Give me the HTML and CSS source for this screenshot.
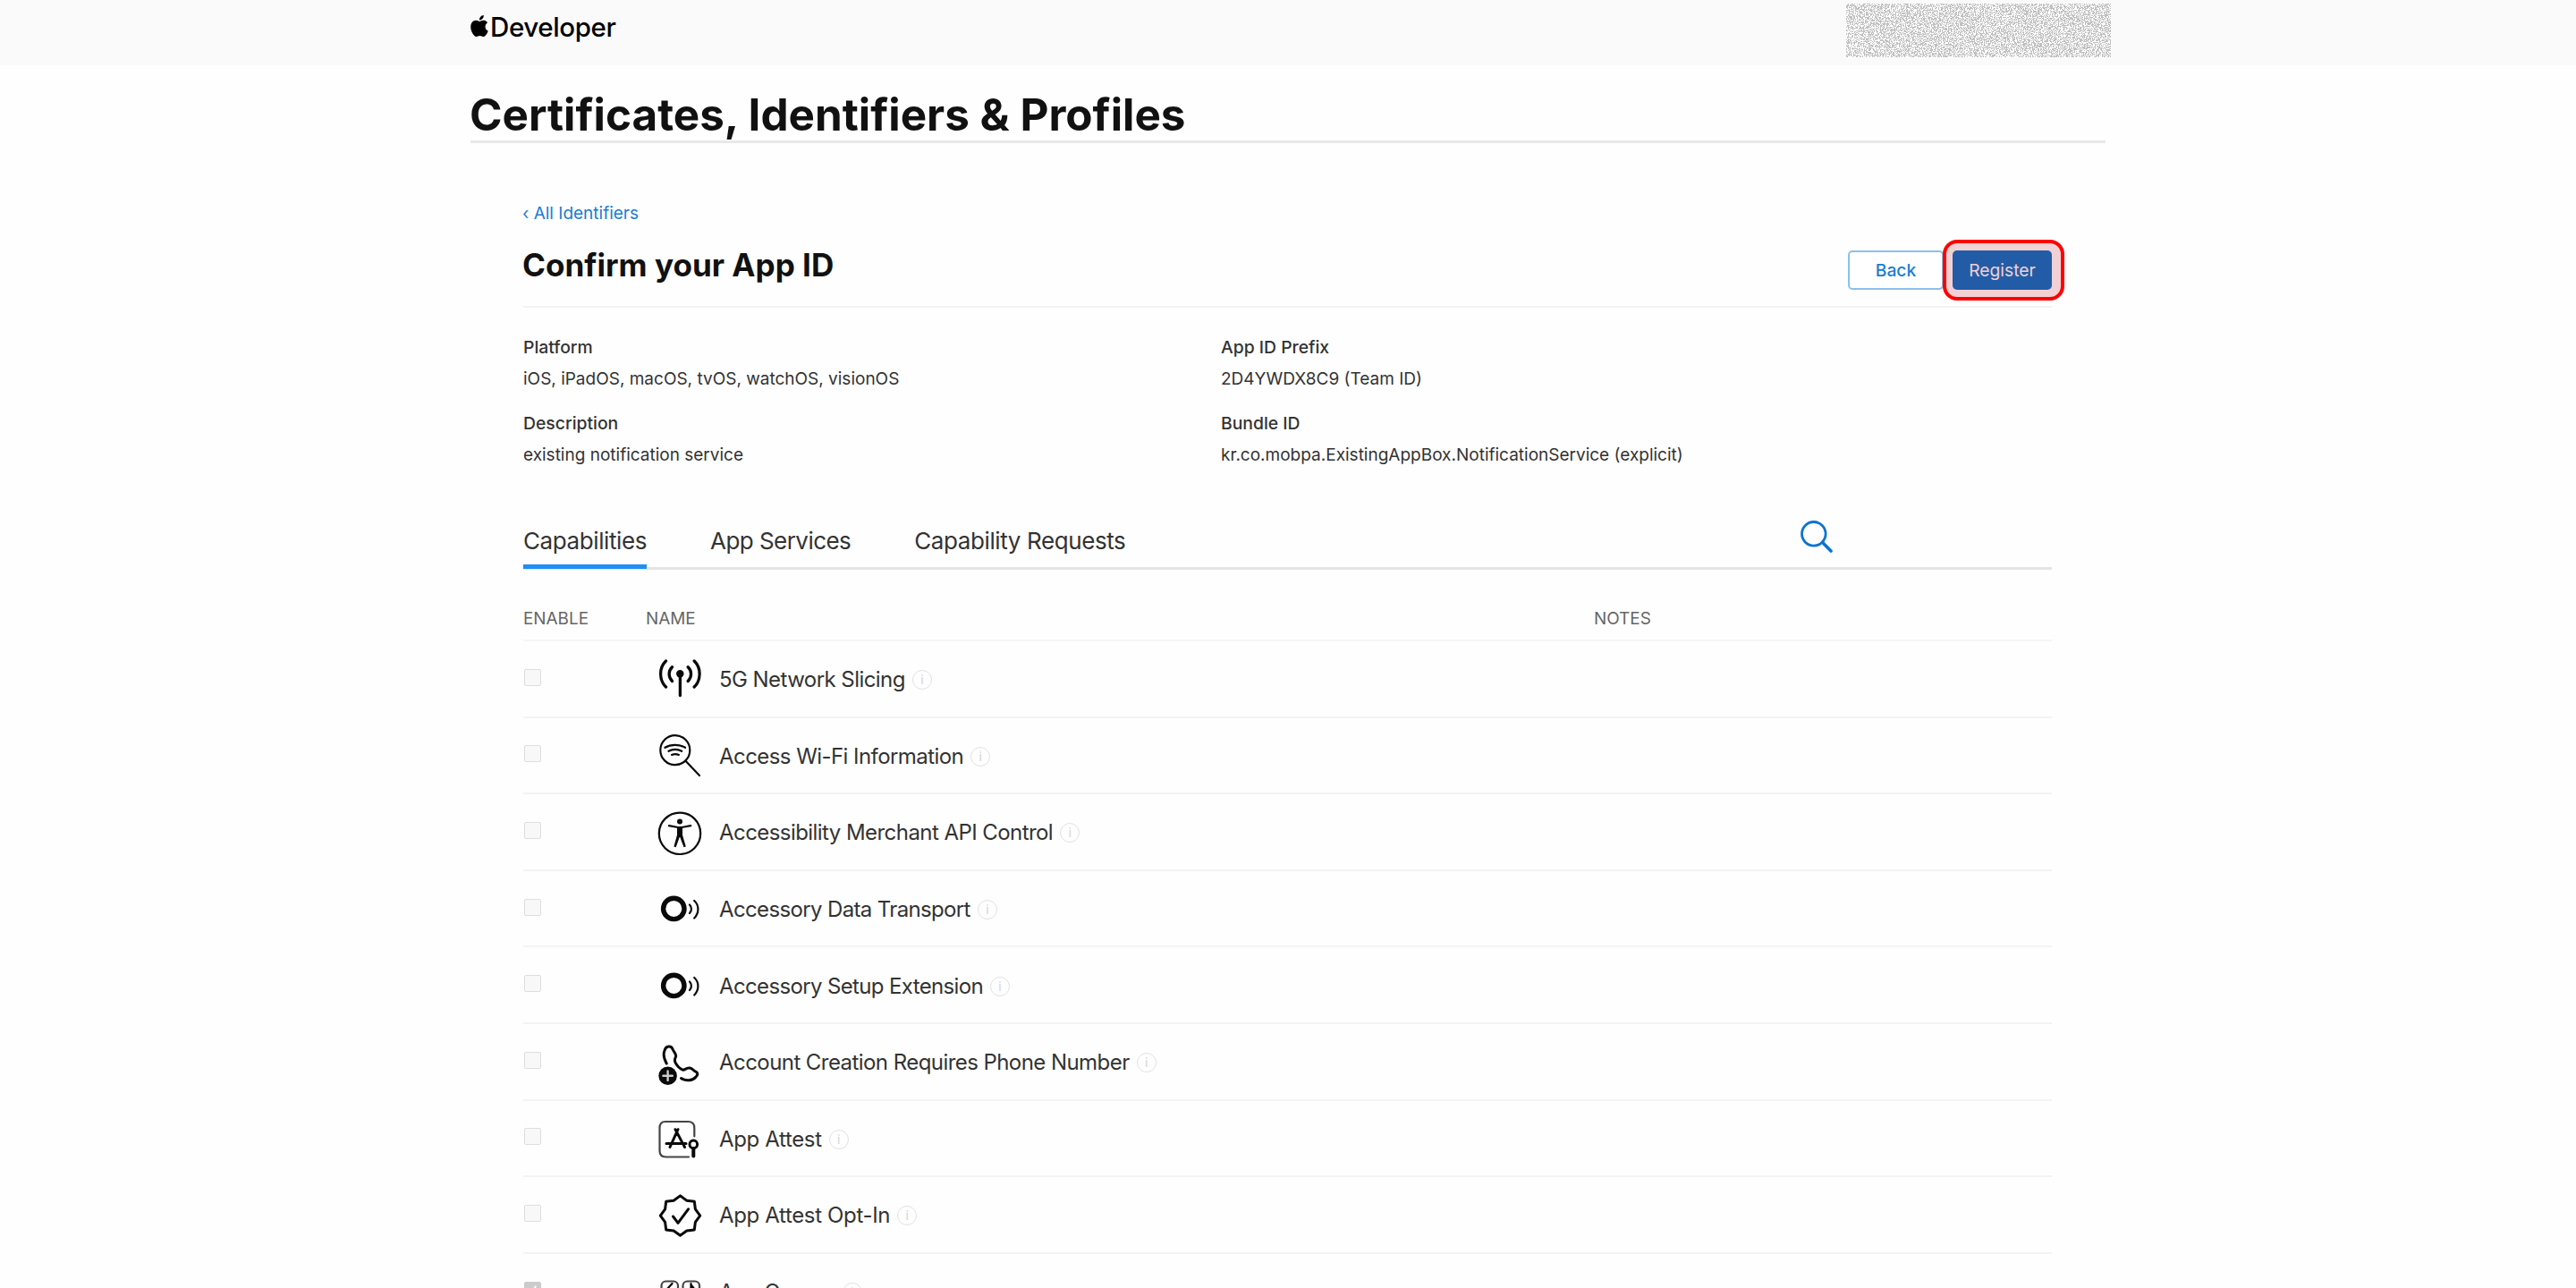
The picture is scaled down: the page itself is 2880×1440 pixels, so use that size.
FILE: index.html
```html
<!DOCTYPE html>
<html lang="en">
<head>
<meta charset="utf-8">
<title>Certificates, Identifiers &amp; Profiles</title>
<link rel="stylesheet" href="styles.css">
</head>
<body>
<header class="topbar">
  <div class="brand">
    <svg class="brand-mark" viewBox="2 0 20 24"><path d="M12.152 6.896c-.948 0-2.415-1.078-3.96-1.04-2.04.027-3.91 1.183-4.961 3.014-2.117 3.675-.546 9.103 1.519 12.09 1.013 1.454 2.208 3.09 3.792 3.039 1.52-.065 2.09-.987 3.935-.987 1.831 0 2.35.987 3.96.948 1.637-.026 2.676-1.48 3.676-2.948 1.156-1.688 1.636-3.325 1.662-3.415-.039-.013-3.182-1.221-3.22-4.857-.026-3.04 2.48-4.494 2.597-4.559-1.429-2.09-3.623-2.324-4.39-2.376-2-.156-3.675 1.09-4.61 1.09zM15.53 3.83c.843-1.012 1.4-2.427 1.245-3.83-1.207.052-2.662.805-3.532 1.818-.78.896-1.454 2.338-1.273 3.714 1.338.104 2.715-.688 3.559-1.701"/></svg>
    <span class="brand-name">Developer</span>
  </div>
  <svg class="redacted" width="296" height="60">
    <filter id="grain" x="0" y="0" width="100%" height="100%" color-interpolation-filters="sRGB">
      <feTurbulence type="fractalNoise" baseFrequency="0.83" numOctaves="2" seed="4"/>
      <feColorMatrix values="1 0 0 0 0.47  1 0 0 0 0.47  1 0 0 0 0.47  0 0 0 0 1"/>
      <feComponentTransfer>
        <feFuncR type="discrete" tableValues="0.753 0.753 0.753 0.753 0.753 0.753 0.753 0.753 0.753 0.753 0.753 0.753 0.753 0.753 0.753 0.753 0.753 0.753 0.753 0.753 0.753 0.753 0.753 0.753 0.753 0.753 0.753 0.753 0.753 0.753 0.753 0.753 0.753 0.753 0.753 0.753 0.753 0.753 0.753 1"/>
        <feFuncG type="discrete" tableValues="0.753 0.753 0.753 0.753 0.753 0.753 0.753 0.753 0.753 0.753 0.753 0.753 0.753 0.753 0.753 0.753 0.753 0.753 0.753 0.753 0.753 0.753 0.753 0.753 0.753 0.753 0.753 0.753 0.753 0.753 0.753 0.753 0.753 0.753 0.753 0.753 0.753 0.753 0.753 1"/>
        <feFuncB type="discrete" tableValues="0.753 0.753 0.753 0.753 0.753 0.753 0.753 0.753 0.753 0.753 0.753 0.753 0.753 0.753 0.753 0.753 0.753 0.753 0.753 0.753 0.753 0.753 0.753 0.753 0.753 0.753 0.753 0.753 0.753 0.753 0.753 0.753 0.753 0.753 0.753 0.753 0.753 0.753 0.753 1"/>
      </feComponentTransfer>
    </filter>
    <rect width="296" height="60" filter="url(#grain)"/>
  </svg>
</header>

<div class="page">
  <h1 class="page-title">Certificates, Identifiers &amp; Profiles</h1>
  <main class="content">
    <a class="back-link">‹ All Identifiers</a>
    <div class="heading">
      <h2 class="heading-title">Confirm your App ID</h2>
      <div class="actions">
        <div class="button button-back">Back</div>
        <div class="highlight"><div class="button button-register">Register</div></div>
      </div>
    </div>

    <section class="info">
      <dl class="info-col">
        <dt>Platform</dt><dd>iOS, iPadOS, macOS, tvOS, watchOS, visionOS</dd>
        <dt>Description</dt><dd>existing notification service</dd>
      </dl>
      <dl class="info-col">
        <dt>App ID Prefix</dt><dd>2D4YWDX8C9 (Team ID)</dd>
        <dt>Bundle ID</dt><dd>kr.co.mobpa.ExistingAppBox.NotificationService (explicit)</dd>
      </dl>
    </section>

    <nav class="tabs">
      <span class="tab tab-active">Capabilities</span>
      <span class="tab tab-services">App Services</span>
      <span class="tab">Capability Requests</span>
      <svg class="search" width="36" height="36" viewBox="0 0 36 36"><circle cx="14.8" cy="14.8" r="13.3"/><path class="search-handle" d="M24.6 24.6L34 34"/></svg>
    </nav>

    <div class="table">
      <div class="table-head"><span>ENABLE</span><span>NAME</span><span>NOTES</span></div>

      <div class="row">
        <span class="check"></span>
        <svg class="icon" viewBox="0 0 52 52"><circle class="solid" cx="26.3" cy="19.2" r="4.2"/><path class="w3 w3-bold" d="M26.4 20V43.5M10.5 5C2.6 12.5 2.6 26.5 10.5 34M17.5 11.7C13 16 13 23.2 17.5 27.5M42.2 5C50.1 12.5 50.1 26.5 42.2 34M35.2 11.7C39.7 16 39.7 23.2 35.2 27.5"/></svg>
        <span class="name">5G Network Slicing</span><span class="tip">i</span>
      </div>
      <div class="row">
        <span class="check"></span>
        <svg class="icon" viewBox="0 0 52 52"><circle class="w2" cx="20.8" cy="18.7" r="16.5"/><path class="w2" d="M32.3 30.6L48 47M9.5 15.8C16 11.8 25.5 11.8 32 15.8M13.5 19.8C18 17.3 23.5 17.3 28.2 19.8M17 23.9C19.5 22.9 22.5 22.9 24.9 23.9"/></svg>
        <span class="name">Access Wi-Fi Information</span><span class="tip">i</span>
      </div>
      <div class="row">
        <span class="check"></span>
        <svg class="icon" viewBox="0 0 52 52"><circle class="w2" cx="26" cy="26.8" r="23.2"/><circle class="solid" cx="26" cy="13.5" r="3"/><path class="w2" d="M14 18.2L24 20H28L38.2 18.2"/><path class="solid" d="M23 19H29V28.5L32.8 41.5L30.5 42.3L26.3 31H25.7L21.7 42.3L19.4 41.5L23 28.5Z"/></svg>
        <span class="name">Accessibility Merchant API Control</span><span class="tip">i</span>
      </div>
      <div class="row">
        <span class="check"></span>
        <svg class="icon" viewBox="0 0 52 52"><circle class="w5" cx="19.3" cy="24.9" r="11.7"/><path class="w2" d="M37 20.5C39.6 23 39.6 27.5 37 30M42.2 16C47.8 21 47.8 30 42.2 35.5"/></svg>
        <span class="name name-tight">Accessory Data Transport</span><span class="tip">i</span>
      </div>
      <div class="row">
        <span class="check"></span>
        <svg class="icon" viewBox="0 0 52 52"><circle class="w5" cx="19.3" cy="24.9" r="11.7"/><path class="w2" d="M37 20.5C39.6 23 39.6 27.5 37 30M42.2 16C47.8 21 47.8 30 42.2 35.5"/></svg>
        <span class="name name-tight">Accessory Setup Extension</span><span class="tip">i</span>
      </div>
      <div class="row">
        <span class="check"></span>
        <svg class="icon" viewBox="0 0 52 52"><path class="w3" d="M11.2 27C8.5 22 7.5 16 9 12.5C10.5 7 16.5 6.5 18.3 11.5C19.8 15 22.5 16.5 21.5 19.5C20.5 21.5 19.5 23 21.3 26.5C23.3 30 26.5 33 29.5 34.2C31.5 34.7 33 31.5 37 32C40.5 32.5 41.5 35.5 44.5 36.5C46.5 37.8 46 40 44 42C40.5 46.5 32.5 47 27.5 43.5"/><circle class="solid" cx="12.6" cy="40.7" r="10.3"/><path class="plus" d="M12.6 35.5V45.9M7.4 40.7H17.8"/></svg>
        <span class="name">Account Creation Requires Phone Number</span><span class="tip">i</span>
      </div>
      <div class="row">
        <span class="check"></span>
        <svg class="icon" viewBox="0 0 52 52"><path class="w2 soft" d="M42.3 22.5V13Q42.3 6 35.3 6H10Q3.5 6 3.5 13V38.5Q3.5 45.5 10.5 45.5H36"/><path class="w3" d="M24 14.7L15 34.5M21 14.7L31.5 34.5M11 30.5H33"/><circle class="w3" cx="41.3" cy="31.4" r="4.3"/><path class="w4" d="M41.3 36V44.5"/></svg>
        <span class="name name-loose">App Attest</span><span class="tip">i</span>
      </div>
      <div class="row">
        <span class="check"></span>
        <svg class="icon" viewBox="0 0 52 52"><path class="w3" d="M26.5 3.9L33.8 9.2L42.3 10.3L43.4 18.8L48.7 26.1L43.4 33.4L42.3 41.9L33.8 43L26.5 48.3L19.2 43L10.7 41.9L9.6 33.4L4.3 26.1L9.6 18.8L10.7 10.3L19.2 9.2ZM18.5 27L24 34.3L35.5 18.8"/></svg>
        <span class="name name-loose">App Attest Opt-In</span><span class="tip">i</span>
      </div>
      <div class="row">
        <span class="check check-on"><svg viewBox="0 0 19 19"><path d="M4.5 10L8 14L14.5 4.5"/></svg></span>
        <svg class="icon" viewBox="0 0 52 52"><rect class="w2 soft" x="5.5" y="13.5" width="18.5" height="18.5" rx="5"/><rect class="w2 soft" x="29.5" y="13.5" width="18.5" height="18.5" rx="5"/><path class="w2" d="M17.500 16L12 22M38.500 16V24M39 18L43 23"/></svg>
        <span class="name">App Groups</span><span class="tip">i</span>
      </div>
    </div>
  </main>
</div>
</body>
</html>
```
FILE: styles.css
```css
* { box-sizing: border-box; }
html { overflow: hidden; }
body {
  margin: 0;
  height: 1440px;
  overflow: hidden;
  background: #fefefe;
  color: #333;
  font-family: "Inter", "Liberation Sans", sans-serif;
}

.topbar {
  display: flex;
  justify-content: space-between;
  height: 73px;
  padding: 4px 520px 0 526px;
  background: #fafafa;
}
.brand { display: flex; color: #000; }
.brand-mark { width: 20px; height: 24px; margin-top: 13px; }
.brand-name {
  margin: 7px 0 0 2px;
  font-size: 29.5px;
  font-weight: 500;
  line-height: 38px;
  letter-spacing: -0.4px;
}
.redacted { display: block; }

.page { width: 1828px; margin-left: 526px; }
.page-title {
  margin: 0;
  padding-top: 26px;
  border-bottom: 3px solid #e8e8e8;
  color: #111;
  font-size: 49.4px;
  font-weight: 700;
  line-height: 58px;
  text-indent: -1px;
  white-space: nowrap;
}

.content { width: 1709px; margin-left: 59px; padding-top: 67px; }
.back-link {
  display: block;
  color: #1a7dd2;
  font-size: 19px;
  line-height: 24px;
  text-indent: -1px;
}
.heading {
  display: flex;
  justify-content: space-between;
  height: 93px;
  border-bottom: 2px solid #f3f3f3;
}
.heading-title {
  margin: 23px 0 0;
  color: #111;
  font-size: 35.1px;
  font-weight: 700;
  line-height: 44px;
  text-indent: -1px;
}
.actions { display: flex; margin: 17px -14px 0 0; }
.button {
  height: 44px;
  border-radius: 5px;
  font-size: 19.3px;
  line-height: 44px;
  text-align: center;
}
.button-back {
  width: 107px;
  margin: 12px -1px 0 0;
  border: 2px solid #8cc0ea;
  background: #fff;
  color: #1a7dd2;
  font-weight: 500;
  line-height: 40px;
}
.highlight {
  position: relative;
  width: 136px;
  height: 68px;
  padding: 8px 10px 8px 7px;
  border: 4px solid #f00;
  border-radius: 16px;
  background: #f1d1d3;
}
.button-register { background: #235ca6; color: #efd0d6; }

.info {
  display: grid;
  grid-template-columns: 780px 1fr;
  padding-top: 31px;
}
.info-col { margin: 0; font-size: 19px; line-height: 26px; }
.info-col dt { margin-bottom: 10px; font-size: 19.35px; font-weight: 500; }
.info-col dd { margin: 0; }
.info-col dd + dt { margin-top: 23px; }

.tabs {
  display: flex;
  align-items: flex-end;
  height: 115px;
  border-bottom: 3px solid #e4e4e4;
}
.tab {
  margin: 0 71px -2px 0;
  padding-bottom: 8px;
  border-bottom: 5px solid transparent;
  font-size: 26px;
  line-height: 36px;
  letter-spacing: -0.4px;
}
.tab-active { border-color: #1d8ff5; }
.tab-services { letter-spacing: -0.55px; }
.search {
  margin: 0 245px 16px auto;
  fill: none;
  stroke: #0a74d0;
  stroke-width: 2.8;
}
.search-handle { stroke-width: 3.6; stroke-linecap: round; }

.table-head {
  display: grid;
  grid-template-columns: 137px 1060px 1fr;
  height: 80px;
  padding-top: 42px;
  border-bottom: 2px solid #f5f5f5;
  color: #666;
  font-size: 18.9px;
  line-height: 26px;
}
.row {
  display: flex;
  align-items: center;
  height: 85.6px;
  padding-top: 3px;
  border-bottom: 2px solid #f3f3f3;
}
.check {
  width: 19px;
  height: 19px;
  margin: -6px 129px 0 1px;
  border: 1.5px solid #dedede;
  border-radius: 2px;
  background: #f8f8f8;
}
.check-on { border-color: #ccc; background: #ccc; }
.check-on svg { display: block; width: 16px; fill: none; stroke: #fff; stroke-width: 2; }

.icon {
  width: 52px;
  height: 52px;
  fill: none;
  stroke: #0a0a0a;
  stroke-linecap: round;
  stroke-linejoin: round;
}
.w2 { stroke-width: 2.2; }
.w3 { stroke-width: 3; }
.w3-bold { stroke-width: 3.3; }
.w4 { stroke-width: 4; }
.w5 { stroke-width: 5.4; }
.soft { stroke: #444; }
.solid { fill: #0a0a0a; stroke: none; }
.plus { stroke: #ccc; stroke-width: 2.4; }

.name {
  margin: 0 8px 0 18px;
  font-size: 24px;
  line-height: 32px;
  letter-spacing: -0.56px;
}
.name-tight { letter-spacing: -0.64px; }
.name-loose { letter-spacing: -0.35px; }
.tip {
  width: 22px;
  height: 22px;
  border: 1.5px solid #e2e2e2;
  border-radius: 50%;
  color: #d4d4d4;
  font-size: 14px;
  line-height: 19px;
  text-align: center;
}
```
